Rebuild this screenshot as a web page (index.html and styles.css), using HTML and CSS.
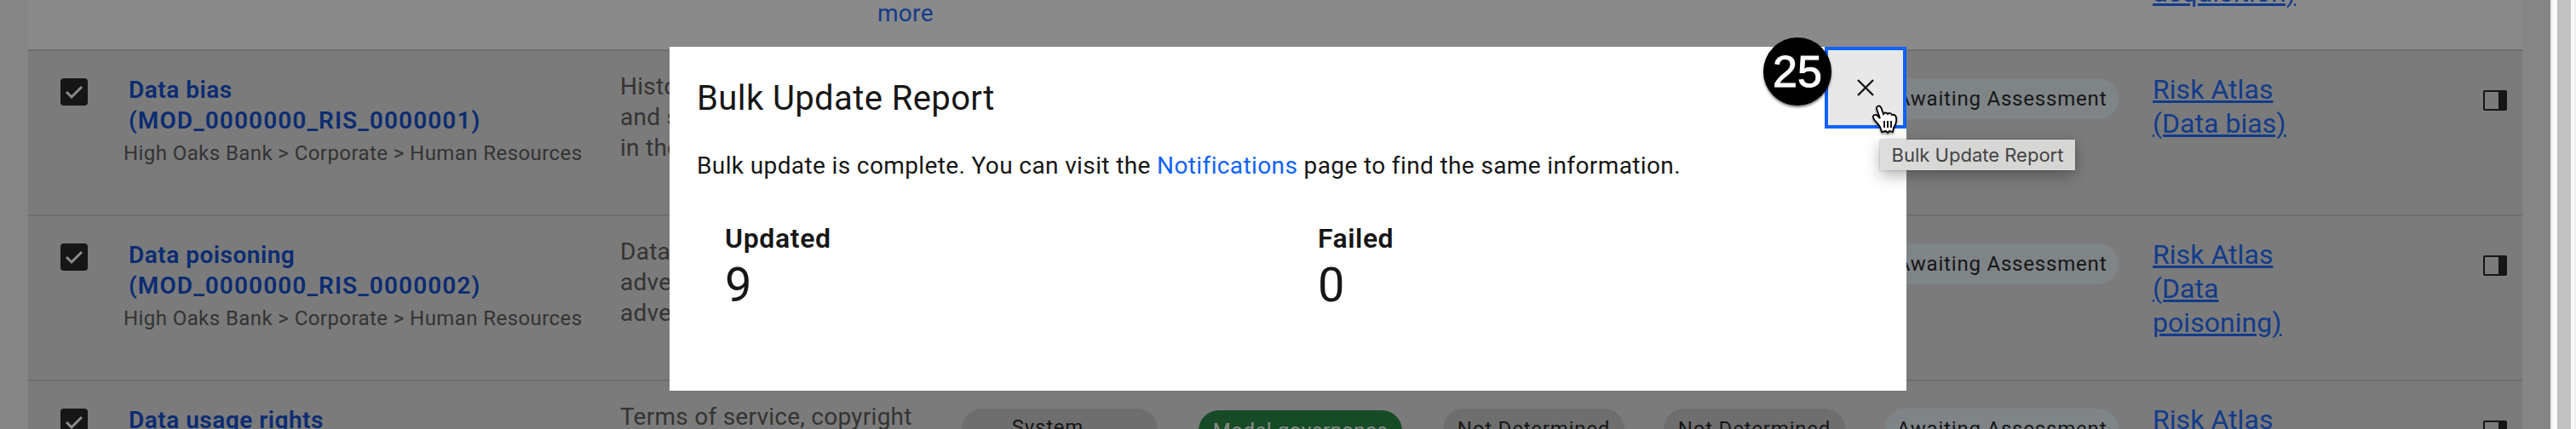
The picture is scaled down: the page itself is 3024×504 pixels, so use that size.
FILE: index.html
```html
<!DOCTYPE html>
<html lang="en">
<head>
<meta charset="utf-8">
<title>Bulk Update Report</title>
<link rel="stylesheet" href="styles.css">
</head>
<body>
<div class="page">
  <main class="table">
    <div class="row row-first">
      <div></div><div></div>
      <div class="more-cell"><a class="more">more</a></div>
      <div></div><div></div><div></div><div></div>
      <div class="atlas-cell"><a class="atlas atlas-long">acquisition)</a></div>
      <div></div>
    </div>
    <div class="row">
      <div class="check"><svg viewBox="0 0 32 32"><path d="M7 16l6 6L25 10"/></svg></div>
      <div class="name"><a class="title">Data bias<br><span class="code">(MOD_0000000_RIS_0000001)</span></a><p class="path">High Oaks Bank &gt; Corporate &gt; Human Resources</p></div>
      <div class="desc">Histo<br>and s<br>in the</div>
      <div></div><div></div><div></div><div></div>
      <div><span class="tag tag-wait">Awaiting Assessment</span></div>
      <div class="atlas-cell"><a class="atlas">Risk Atlas<br>(Data bias)</a></div>
      <div class="panel"><svg viewBox="0 0 28 24"><rect x="1" y="1" width="26" height="22" rx="1"/><path d="M18 1h8v22h-8z"/></svg></div>
    </div>
    <div class="row">
      <div class="check"><svg viewBox="0 0 32 32"><path d="M7 16l6 6L25 10"/></svg></div>
      <div class="name"><a class="title">Data poisoning<br><span class="code">(MOD_0000000_RIS_0000002)</span></a><p class="path">High Oaks Bank &gt; Corporate &gt; Human Resources</p></div>
      <div class="desc">Data<br>adve<br>adve</div>
      <div></div><div></div><div></div><div></div>
      <div><span class="tag tag-wait">Awaiting Assessment</span></div>
      <div class="atlas-cell"><a class="atlas">Risk Atlas<br>(Data<br>poisoning)</a></div>
      <div class="panel"><svg viewBox="0 0 28 24"><rect x="1" y="1" width="26" height="22" rx="1"/><path d="M18 1h8v22h-8z"/></svg></div>
    </div>
    <div class="row">
      <div class="check"><svg viewBox="0 0 32 32"><path d="M7 16l6 6L25 10"/></svg></div>
      <div class="name"><a class="title">Data usage rights</a></div>
      <div class="desc">Terms of service, copyright</div>
      <div><span class="tag tag-system">System</span></div>
      <div><span class="tag tag-model">Model governance</span></div>
      <div><span class="tag tag-none">Not Determined</span></div>
      <div><span class="tag tag-none">Not Determined</span></div>
      <div><span class="tag tag-wait">Awaiting Assessment</span></div>
      <div class="atlas-cell"><a class="atlas">Risk Atlas</a></div>
      <div class="panel"><svg viewBox="0 0 28 24"><rect x="1" y="1" width="26" height="22" rx="1"/><path d="M18 1h8v22h-8z"/></svg></div>
    </div>
  </main>
  <div class="scrollbar"><div class="thumb"></div></div>
</div>
<div class="overlay"></div>
<section class="modal">
  <h1 class="modal-title">Bulk Update Report</h1>
  <p class="modal-text">Bulk update is complete. You can visit the <a>Notifications</a> page to find the same information.</p>
  <div class="stats">
    <div><div class="stat-label">Updated</div><div class="stat-value">9</div></div>
    <div><div class="stat-label stat-failed">Failed</div><div class="stat-value">0</div></div>
  </div>
  <button class="close" aria-label="Close"><svg viewBox="0 0 20 20"><path d="M1 1l18 18M19 1L1 19"/></svg></button>
</section>
<div class="badge">25</div>
<div class="tooltip">Bulk Update Report</div>
<svg class="cursor" viewBox="0 0 32 36"><path d="M11 29 L10 26 C8 22 3 19 2 15 C1 12 5 11 7 13 L10 16 L6 5 C5 2 9 0 11 3 L14 11 C15 9 18 9 19 11 C21 9 23 10 24 12 C27 11 29 13 29 16 C30 21 28 24 26 27 L25 32 L21 31 L19 33 L17 31 L12 32 Z"/><path d="M15 19v8M19 19v8M23 19v8"/></svg>
</body>
</html>
```
FILE: styles.css
```css
* { box-sizing: border-box; margin: 0; padding: 0; }
html { height: 504px; overflow: hidden; }
body { width: 3024px; height: 504px; overflow: hidden; position: relative; font-family: Roboto, sans-serif; color: #161616; background: #f4f4f4; }
.page { display: flex; height: 504px; overflow: hidden; }
.table { width: 2928px; height: 504px; margin-left: 33px; overflow: hidden; }
.row { display: grid; height: 194px; padding-left: 38px; border-top: 2px solid #c6c6c6; background: #e0e0e0; white-space: nowrap;
  grid-template-columns: 75px 582px 401px 278px 287px 259px 260px 314px 388px 46px; }
.row-first { height: 58px; border-top: 0; background: #fff; }
.row > :nth-last-child(2) { grid-column: 9; }
.row > :last-child { grid-column: 10; }
.more-cell { padding: 0 0 0 302px; }
.more { display: block; color: #0f62fe; font-size: 28px; line-height: 36px; letter-spacing: .3px; margin-top: -2px; }
.check { width: 32px; height: 32px; margin-top: 32px; background: #161616; border-radius: 4px; }
.check svg { display: block; width: 32px; height: 32px; fill: none; stroke: #fff; stroke-width: 3; }
.name { padding-top: 28px; }
.title { display: block; margin-left: 5px; color: #0043ce; font-size: 28px; font-weight: 600; line-height: 36px; letter-spacing: .5px; }
.code { letter-spacing: 1.1px; }
.path { margin: 2px 0 0 -1px; color: #525252; font-size: 24px; line-height: 36px; letter-spacing: .42px; }
.desc { padding-top: 24px; color: #525252; font-size: 28px; line-height: 36px; letter-spacing: .26px; }
.tag { display: block; height: 48px; margin-top: 32px; padding-top: 1px; border-radius: 24px; font-size: 24px; line-height: 47px; text-align: center; letter-spacing: .8px; }
.tag-wait { width: 274px; background: #e8f2f8; }
.tag-system { width: 230px; padding: 0 28px 0 0; background: #c6c6c6; line-height: 45px; }
.tag-model { width: 239px; margin-top: 34px; background: #198038; color: #fff; letter-spacing: .55px; }
.tag-none { width: 213px; background: #c6c6c6; }
.atlas-cell { padding-top: 25px; }
.atlas { display: block; color: #0f62fe; font-size: 32px; line-height: 40px; letter-spacing: .05px; text-decoration: underline; text-decoration-thickness: 3px; text-underline-offset: 2px; }
.row-first .atlas-cell { padding: 0; }
.atlas-long { margin-top: -29px; }
.panel svg { display: block; width: 28px; height: 24px; margin-top: 46px; fill: none; stroke: #161616; stroke-width: 2; }
.panel path { fill: #161616; stroke: none; }
.scrollbar { position: relative; z-index: 3; width: 30px; height: 504px; margin-left: 33px; padding-left: 6px; background: #fafafa; border-left: 2px solid #e8e8e8; border-right: 2px solid #ededed; }
.thumb { width: 16px; height: 504px; background: #c1c1c1; }
.overlay { position: absolute; z-index: 2; inset: 0 30px 0 0; background: rgba(22, 22, 22, .5); }
.modal { position: absolute; z-index: 4; left: 786px; top: 55px; width: 1452px; height: 404px; padding: 35px 32px 0; background: #fff; }
.modal-title { font-size: 40px; font-weight: 400; line-height: 52px; letter-spacing: .4px; }
.modal-text { margin-top: 33px; font-size: 28px; line-height: 40px; letter-spacing: .38px; white-space: nowrap; }
.modal-text a { color: #0f62fe; }
.stats { display: grid; grid-template-columns: 696px 1fr; margin: 45px 0 0 33px; }
.stat-label { font-size: 32px; font-weight: 600; line-height: 40px; letter-spacing: .65px; }
.stat-failed { letter-spacing: .5px; }
.stat-value { margin-top: 3px; font-size: 56px; line-height: 64px; font-weight: 400; }
.close { position: absolute; right: 0; top: 0; width: 96px; height: 96px; display: grid; place-items: center; border: 4px solid #0f62fe; background: #e8e8e8; }
.close svg { width: 20px; height: 20px; fill: none; stroke: #161616; stroke-width: 2.4; }
.badge { position: absolute; z-index: 5; left: 2070px; top: 44px; width: 80px; height: 80px; border-radius: 50%; background: #000; color: #fff; box-shadow: 0 2px 3px rgba(0, 0, 0, .55); font: 52px/81px "Liberation Sans", sans-serif; text-align: center; -webkit-text-stroke: 1px #fff; }
.tooltip { position: absolute; z-index: 5; left: 2207px; top: 164px; width: 229px; height: 36px; background: linear-gradient(90deg, #dedede, #d6d6d4 35%); box-shadow: 0 6px 18px rgba(0, 0, 0, .3), 0 0 2px rgba(0, 0, 0, .3); color: #444; font: 22px/36px Inter, sans-serif; text-align: center; white-space: nowrap; }
.cursor { position: absolute; z-index: 6; left: 2197px; top: 123px; width: 32px; height: 36px; fill: #fff; stroke: #000; stroke-width: 1.8; filter: drop-shadow(0 2px 1px rgba(0, 0, 0, .4)); }
```
